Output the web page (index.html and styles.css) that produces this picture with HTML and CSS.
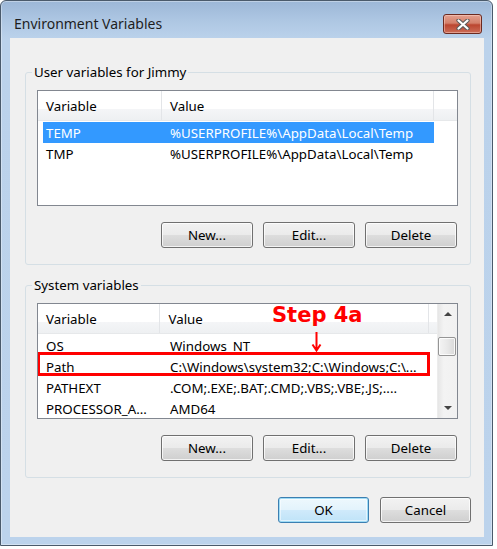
FILE: index.html
```html
<!DOCTYPE html>
<html lang="en">
<head>
<meta charset="utf-8">
<title>Environment Variables</title>
<link rel="stylesheet" href="styles.css">
</head>
<body>
<div class="window">
  <div class="titlebar">
    <span class="title">Environment Variables</span>
    <button class="close" aria-label="Close">
      <svg width="14" height="11" viewBox="0 0 14 11">
        <path d="M2.5 1.5 L11.5 9.5 M11.5 1.5 L2.5 9.5" stroke="#5a5a5a" stroke-width="4.2" stroke-linecap="round"/>
        <path d="M2.5 1.5 L11.5 9.5 M11.5 1.5 L2.5 9.5" stroke="#ffffff" stroke-width="2.2" stroke-linecap="round"/>
      </svg>
    </button>
  </div>
  <div class="client">
    <section class="group">
      <span class="legend">User variables for Jimmy</span>
      <div class="list">
        <div class="list-main">
          <div class="list-head">
            <span class="hcell hvar">Variable</span>
            <span class="hcell hval">Value</span>
            <span class="hcell hfill"></span>
          </div>
          <div class="rows">
            <div class="row selected"><span class="cell">TEMP</span><span class="cell">%USERPROFILE%\AppData\Local\Temp</span></div>
            <div class="row"><span class="cell">TMP</span><span class="cell">%USERPROFILE%\AppData\Local\Temp</span></div>
          </div>
        </div>
      </div>
      <div class="btn-row">
        <button class="btn">New...</button>
        <button class="btn">Edit...</button>
        <button class="btn">Delete</button>
      </div>
    </section>

    <section class="group group-sys">
      <span class="legend">System variables</span>
      <div class="list">
        <div class="list-main">
          <div class="list-head">
            <span class="hcell hvar">Variable</span>
            <span class="hcell hval">Value</span>
            <span class="hcell hfill"></span>
          </div>
          <div class="rows">
            <div class="row"><span class="cell">OS</span><span class="cell">Windows_NT</span></div>
            <div class="row"><span class="cell">Path</span><span class="cell">C:\Windows\system32;C:\Windows;C:\...</span></div>
            <div class="row"><span class="cell">PATHEXT</span><span class="cell">.COM;.EXE;.BAT;.CMD;.VBS;.VBE;.JS;....</span></div>
            <div class="row"><span class="cell">PROCESSOR_A...</span><span class="cell">AMD64</span></div>
          </div>
        </div>
        <div class="vscroll">
          <div class="sb-btn"><span class="arrow-up"></span></div>
          <div class="sb-track"><div class="sb-thumb"></div></div>
          <div class="sb-btn"><span class="arrow-down"></span></div>
        </div>
        <span class="step-label">Step 4a</span>
        <svg class="step-arrow" width="11" height="20" viewBox="0 0 11 20">
          <path d="M5.5 0 V18.5 M1.5 12.5 L5.5 18.5 L9.5 12.5" fill="none" stroke="#ff0000" stroke-width="2"/>
        </svg>
        <div class="highlight"></div>
      </div>
      <div class="btn-row">
        <button class="btn">New...</button>
        <button class="btn">Edit...</button>
        <button class="btn">Delete</button>
      </div>
    </section>

    <div class="footer">
      <button class="btn btn-default">OK</button>
      <button class="btn">Cancel</button>
    </div>
  </div>
</div>
</body>
</html>
```

FILE: styles.css
```css
* { box-sizing: border-box; }

html, body {
  margin: 0;
  padding: 0;
}

body {
  background: #ffffff;
  font-family: "Noto Sans", "Open Sans", sans-serif;
  font-size: 13.3px;
  color: #000;
}

.window {
  width: 493px;
  height: 546px;
  display: flex;
  flex-direction: column;
  border: 1px solid #4a5a6b;
  border-radius: 6px 6px 0 0;
  background: linear-gradient(180deg, #9cb7d7 0px, #aec7e3 20px, #bbd2eb 38px, #bcd3ec 100%);
  box-shadow: inset 0 0 0 1px rgba(255,255,255,0.35), 0 3px 0 #2e3a40;
  padding: 0 8px 8px 9px;
}

.titlebar {
  height: 38px;
  display: flex;
  align-items: flex-start;
  justify-content: space-between;
  padding: 0 2px 0 4px;
}

.title {
  margin-top: 14px;
  font-size: 14px;
  line-height: 18px;
  color: #1e1e1e;
}

.close {
  margin-top: 13px;
  width: 39px;
  height: 20px;
  padding: 0;
  border: 1px solid #6b2a20;
  border-radius: 3px;
  background: linear-gradient(180deg, #e4a08f 0%, #d3806b 45%, #bb4630 55%, #cc6d58 100%);
  box-shadow: inset 0 0 0 1px rgba(255,220,210,0.45);
  display: flex;
  align-items: center;
  justify-content: center;
}

.client {
  flex: 1;
  background: #f0f0f0;
  display: flex;
  flex-direction: column;
  padding: 34px 13px 14px 15px;
}

.group {
  position: relative;
  height: 193px;
  border: 1px solid #d5dfe5;
  border-radius: 3px;
  padding: 17px 12px 16px 11px;
  display: flex;
  flex-direction: column;
}

.group-sys {
  margin-top: 20px;
}

.legend {
  position: absolute;
  top: -10px;
  left: 6px;
  padding: 0 2px;
  background: #f0f0f0;
  line-height: 18px;
}

.list {
  position: relative;
  height: 116px;
  border: 1px solid #828790;
  background: #fff;
  display: flex;
  overflow: hidden;
}

.list-main {
  flex: 1;
  min-width: 0;
}

.list-head {
  height: 30px;
  display: flex;
  background: linear-gradient(180deg, #ffffff 0%, #ffffff 62%, #f4f5f7 63%, #eef0f2 100%);
  border-bottom: 1px solid #e6e8ea;
}

.hcell {
  display: flex;
  align-items: center;
  padding-left: 8px;
  border-right: 1px solid #e3e5e8;
  white-space: nowrap;
}

.hvar { width: 124px; }
.hval { width: 272px; }
.hfill { flex: 1; border-right: none; }

.rows {
  margin-top: 1px;
  padding-left: 5px;
}

.row {
  width: 391px;
  height: 21px;
  display: grid;
  grid-template-columns: 124px 267px;
  align-items: center;
}

.cell {
  padding-left: 3px;
  white-space: nowrap;
  overflow: hidden;
  text-overflow: clip;
}

.row.selected {
  background: #3399ff;
  color: #fff;
}

.vscroll {
  width: 20px;
  display: flex;
  flex-direction: column;
  background: linear-gradient(90deg, #e6e6e6 0%, #f3f3f3 30%, #f1f1f1 100%);
  border-left: 1px solid #ececec;
}

.sb-btn {
  height: 20px;
  display: flex;
  align-items: center;
  justify-content: center;
}

.arrow-up {
  width: 0;
  height: 0;
  border-left: 4px solid transparent;
  border-right: 4px solid transparent;
  border-bottom: 4px solid #444;
}

.arrow-down {
  width: 0;
  height: 0;
  border-left: 4px solid transparent;
  border-right: 4px solid transparent;
  border-top: 4px solid #444;
}

.sb-track {
  flex: 1;
}

.sb-thumb {
  margin: 13px 1px 0 0;
  height: 19px;
  border: 1px solid #959595;
  border-radius: 2px;
  background: linear-gradient(90deg, #f4f4f4 0%, #e9e9e9 50%, #d9d9d9 100%);
  box-shadow: inset 0 0 0 1px rgba(255,255,255,0.8);
}

.step-label {
  position: absolute;
  left: 234px;
  top: 1px;
  font-family: "DejaVu Sans", sans-serif;
  font-weight: bold;
  font-size: 21px;
  line-height: 21px;
  color: #ff0000;
  white-space: nowrap;
}

.step-arrow {
  position: absolute;
  left: 273px;
  top: 28px;
}

.highlight {
  position: absolute;
  left: -1px;
  top: 48px;
  width: 393px;
  height: 24px;
  border: 3px solid #ff0000;
}

.btn-row {
  display: flex;
  justify-content: flex-end;
  gap: 10px;
  margin-top: 16px;
  margin-right: 1px;
}

.btn {
  width: 92px;
  height: 26px;
  padding: 0;
  border: 1px solid #707070;
  border-radius: 3px;
  background: linear-gradient(180deg, #f2f2f2 0%, #ebebeb 48%, #dddddd 52%, #cfcfcf 100%);
  box-shadow: inset 0 0 0 1px rgba(255,255,255,0.75);
  font-family: inherit;
  font-size: 13.3px;
  color: #000;
}

.footer {
  margin-top: 19px;
  display: flex;
  justify-content: flex-end;
  gap: 11px;
}

.footer .btn { width: 91px; }

.btn-default {
  border-color: #3c7fb1;
  background: linear-gradient(180deg, #eef8fd 0%, #e3f3fc 48%, #cfeafb 52%, #bfe3f8 100%);
  box-shadow: inset 0 0 0 1px #9fdcf6, inset 0 0 0 2px rgba(255,255,255,0.5);
}
```
